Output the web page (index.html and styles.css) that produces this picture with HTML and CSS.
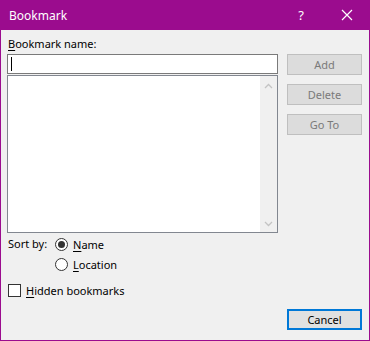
FILE: index.html
```html
<!DOCTYPE html>
<html lang="en">
<head>
  <meta charset="UTF-8">
  <title>Bookmark</title>
  <link rel="stylesheet" href="styles.css">
</head>
<body>
  <div class="dialog">
    <div class="titlebar">
      <span class="title">Bookmark</span>
      <span class="help">?</span>
      <span class="close">
        <svg width="12" height="12" viewBox="0 0 12 12"><path d="M1 1L11 11M11 1L1 11" stroke="#fff" stroke-width="1.2" fill="none"/></svg>
      </span>
    </div>

    <div class="content">
      <div class="main">
        <div class="left">
          <label class="field-label"><u>B</u>ookmark name:</label>
          <div class="name-input"><span class="caret"></span></div>
          <div class="listbox">
            <div class="list-items"></div>
            <div class="scrollbar">
              <svg width="9" height="6" viewBox="0 0 9 6"><path d="M1 5L4.5 1.5L8 5" stroke="#c4c4c4" stroke-width="1.3" fill="none"/></svg>
              <svg width="9" height="6" viewBox="0 0 9 6"><path d="M1 1L4.5 4.5L8 1" stroke="#c4c4c4" stroke-width="1.3" fill="none"/></svg>
            </div>
          </div>

          <div class="sort">
            <span class="sort-label">Sort by:</span>
            <div class="radios">
              <div class="radio-row"><span class="radio checked"></span><span><u>N</u>ame</span></div>
              <div class="radio-row"><span class="radio"></span><span><u>L</u>ocation</span></div>
            </div>
          </div>

          <div class="check-row"><span class="checkbox"></span><span><u>H</u>idden bookmarks</span></div>
        </div>

        <div class="buttons">
          <button class="btn" disabled>Add</button>
          <button class="btn" disabled>Delete</button>
          <button class="btn" disabled>Go To</button>
        </div>
      </div>

      <div class="footer">
        <button class="btn default">Cancel</button>
      </div>
    </div>
  </div>
</body>
</html>
```

FILE: styles.css
```css
* {
  box-sizing: border-box;
}
body {
  margin: 0;
  font-family: "Noto Sans", "Segoe UI", sans-serif;
  font-size: 11px;
  color: #000;
}
u {
  text-decoration: underline;
  text-underline-offset: 2px;
}
.dialog {
  width: 370px;
  height: 341px;
  background-color: #f0f0f0;
  border: 1px solid #9b0c8e;
  border-top: none;
  display: flex;
  flex-direction: column;
}
.titlebar {
  height: 30px;
  margin: 0 -1px;
  background-color: #9b0c8e;
  color: #fff;
  display: flex;
  align-items: center;
  padding-left: 9px;
}
.title {
  flex: 1;
  font-size: 12px;
}
.help {
  width: 46px;
  text-align: center;
  font-size: 13px;
}
.close {
  width: 46px;
  display: flex;
  justify-content: center;
}
.content {
  flex: 1;
  display: flex;
  flex-direction: column;
  padding: 6px 7px 10px 6px;
}
.main {
  flex: 1;
  display: flex;
  gap: 9px;
}
.left {
  width: 272px;
  display: flex;
  flex-direction: column;
}
.field-label {
  height: 18px;
  padding-left: 1px;
  line-height: 16px;
}
.name-input {
  height: 20px;
  background-color: #fff;
  border: 1px solid #7a7a7a;
  padding: 2px 3px;
}
.caret {
  display: block;
  width: 1px;
  height: 14px;
  background-color: #000;
}
.listbox {
  height: 158px;
  margin-top: 1px;
  background-color: #fff;
  border: 1px solid #828790;
  display: flex;
}
.list-items {
  flex: 1;
}
.scrollbar {
  width: 17px;
  background-color: #f0f0f0;
  display: flex;
  flex-direction: column;
  justify-content: space-between;
  align-items: center;
  padding: 7px 0 5px;
}
.sort {
  display: flex;
  margin-top: 1px;
  padding-left: 1px;
}
.sort-label {
  width: 47px;
  line-height: 20px;
}
.radio-row, .check-row {
  display: flex;
  align-items: center;
  height: 20px;
  gap: 5px;
}
.radio {
  width: 13px;
  height: 13px;
  border: 1px solid #333;
  border-radius: 50%;
  background-color: #fff;
  display: flex;
  align-items: center;
  justify-content: center;
}
.radio.checked::after {
  content: "";
  width: 7px;
  height: 7px;
  border-radius: 50%;
  background-color: #333;
}
.check-row {
  margin-top: 6px;
  padding-left: 1px;
}
.checkbox {
  width: 13px;
  height: 13px;
  border: 1px solid #333;
  background-color: #fff;
}
.buttons {
  width: 75px;
  display: flex;
  flex-direction: column;
  gap: 9px;
  padding-top: 18px;
}
.btn {
  width: 75px;
  height: 21px;
  font-family: inherit;
  font-size: 11px;
  background-color: #e1e1e1;
  border: 1px solid #adadad;
  color: #000;
  padding: 0;
}
.btn:disabled {
  background-color: #dcdcdc;
  border-color: #bfbfbf;
  color: #7a7a7a;
}
.btn.default {
  border: 2px solid #0078d7;
}
.footer {
  display: flex;
  justify-content: flex-end;
}
```
